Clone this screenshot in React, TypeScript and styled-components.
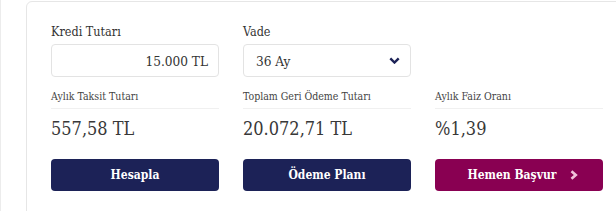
import React from 'react';
import styled, { createGlobalStyle } from 'styled-components';

const GlobalStyle = createGlobalStyle`
  html, body {
    margin: 0;
    padding: 0;
    background: #fff;
  }
  body {
    font-family: "DejaVu Serif Condensed", "Liberation Serif", serif;
    color: #333;
  }
`;

const Page = styled.div`
  width: 616px;
  height: 211px;
  padding: 1px 0 0 25px;
  box-sizing: border-box;
  border-left: 1px solid #ececec;
  overflow: hidden;
`;

const Card = styled.div`
  width: 640px;
  height: 240px;
  box-sizing: border-box;
  border: 1px solid #e6e6e6;
  border-radius: 6px;
  padding: 21px 0 0 24px;
  background: #fff;
`;

const Grid = styled.div`
  display: grid;
  grid-template-columns: repeat(3, 168px);
  column-gap: 24px;
`;

const Field = styled.div`
  display: flex;
  flex-direction: column;
`;

const Label = styled.div`
  font-size: 12.5px;
  line-height: 18px;
  height: 18px;
  color: #333;
  margin-bottom: 3px;
`;

const Box = styled.div<{ $align?: 'left' | 'right' }>`
  height: 33px;
  box-sizing: border-box;
  border: 1px solid #e3e3e3;
  border-radius: 4px;
  display: flex;
  align-items: center;
  justify-content: ${({ $align }) => ($align === 'right' ? 'flex-end' : 'space-between')};
  padding: 0 10px 0 12px;
  font-size: 13.5px;
  color: #333;
`;

const Result = styled.div`
  display: flex;
  flex-direction: column;
  margin-top: 11px;
`;

const SmallLabel = styled.div`
  font-size: 10.5px;
  line-height: 16px;
  height: 16px;
  color: #444;
  padding-bottom: 4px;
  border-bottom: 1px solid #f0f0f0;
`;

const Value = styled.div`
  font-size: 18px;
  line-height: 26px;
  height: 26px;
  margin-top: 7px;
  color: #383838;
`;

const Button = styled.button<{ $variant?: 'navy' | 'berry' }>`
  margin-top: 17px;
  height: 32px;
  border: none;
  border-radius: 4px;
  background: ${({ $variant }) => ($variant === 'berry' ? '#890052' : '#1c2257')};
  color: #fff;
  font-family: "DejaVu Serif Condensed", "Liberation Serif", serif;
  font-size: 12px;
  font-weight: bold;
  display: flex;
  align-items: center;
  justify-content: center;
  padding: 0 ${({ $variant }) => ($variant === 'berry' ? '14px' : '0')} 0 0;
  position: relative;
`;

const Arrow = styled.svg`
  position: absolute;
  right: 25px;
  top: 50%;
  margin-top: -5px;
  width: 8px;
  height: 10px;
`;

export default function App() {
  return (
    <>
      <GlobalStyle />
      <Page>
        <Card>
          <Grid>
            <Field>
              <Label>Kredi Tutarı</Label>
              <Box $align="right">15.000 TL</Box>
            </Field>
            <Field>
              <Label>Vade</Label>
              <Box>
                <span>36 Ay</span>
                <svg width="11" height="7" viewBox="0 0 11 7">
                  <path d="M1.3 1.3 L5.5 5.5 L9.7 1.3" fill="none" stroke="#1c2257" strokeWidth="2.4" />
                </svg>
              </Box>
            </Field>
            <div />

            <Result>
              <SmallLabel>Aylık Taksit Tutarı</SmallLabel>
              <Value>557,58 TL</Value>
            </Result>
            <Result>
              <SmallLabel>Toplam Geri Ödeme Tutarı</SmallLabel>
              <Value>20.072,71 TL</Value>
            </Result>
            <Result>
              <SmallLabel>Aylık Faiz Oranı</SmallLabel>
              <Value>%1,39</Value>
            </Result>

            <Button>Hesapla</Button>
            <Button>Ödeme Planı</Button>
            <Button $variant="berry">
              Hemen Başvur
              <Arrow viewBox="0 0 8 10">
                <path d="M1.5 1.2 L5.8 5 L1.5 8.8" fill="none" stroke="#f1c2da" strokeWidth="2.6" />
              </Arrow>
            </Button>
          </Grid>
        </Card>
      </Page>
    </>
  );
}
